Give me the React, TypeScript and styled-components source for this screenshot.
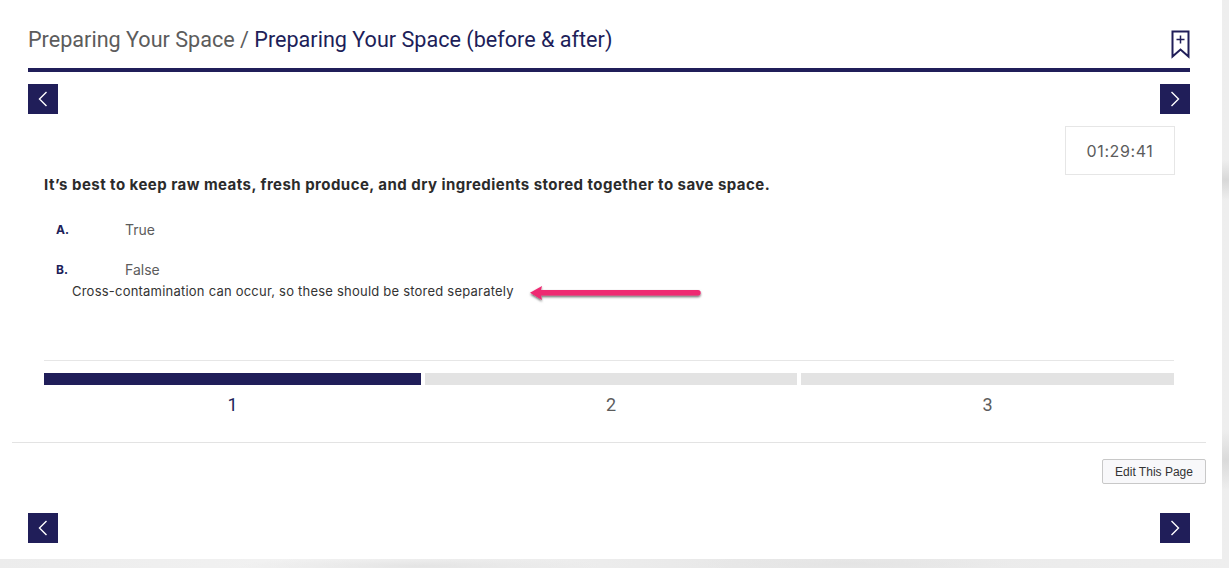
import React from 'react';
import styled, { createGlobalStyle } from 'styled-components';

const GlobalStyle = createGlobalStyle`
    html, body {
        margin: 0;
        padding: 0;
        height: 100%;
        overflow: hidden;
    }
    body {
        font-family: Inter, Roboto, 'Noto Sans', sans-serif;
        background: #fff;
    }
`;

const Chevron: React.FC<{ dir: 'left' | 'right' }> = ({ dir }) => (
    <svg width="10" height="16" viewBox="0 0 10 16" fill="none">
        <path
            d={dir === 'left' ? 'M8.5 1 L1.5 8 L8.5 15' : 'M1.5 1 L8.5 8 L1.5 15'}
            stroke="#fff"
            strokeWidth="1.4"
        />
    </svg>
);

const BookmarkIcon = () => (
    <svg width="19" height="29" viewBox="0 0 19 29" fill="none">
        <path d="M1.5 1.5 H17.5 V26.5 L9.5 19.5 L1.5 26.5 Z" stroke="#201e59" strokeWidth="2" />
        <path d="M9.5 5.5 V13.5 M5.5 9.5 H13.5" stroke="#201e59" strokeWidth="1.5" />
    </svg>
);

const PinkArrow = () => (
    <ArrowWrap>
        <svg width="180" height="24" viewBox="0 0 180 24" fill="none">
            <defs>
                <filter id="arrowShadow" x="-5%" y="-50%" width="110%" height="220%">
                    <feDropShadow dx="0" dy="1.5" stdDeviation="1.3" floodColor="#000" floodOpacity="0.6" />
                </filter>
            </defs>
            <g filter="url(#arrowShadow)">
                <path d="M14 9 L171 9 A2.7 2.7 0 0 1 171 14.4 L14 14.4 L15 19 L3 11.7 L15 5 Z" fill="#ee2a72" />
            </g>
        </svg>
    </ArrowWrap>
);

const steps = [
    { label: '1', active: true, grow: 377 },
    { label: '2', active: false, grow: 372 },
    { label: '3', active: false, grow: 373 },
];

const App: React.FC = () => (
    <Page>
        <GlobalStyle />
        <Card>
            <Header>
                <Title>
                    Preparing Your Space / <Current>Preparing Your Space (before &amp; after)</Current>
                </Title>
                <BookmarkIcon />
            </Header>

            <NavRow>
                <NavButton aria-label="Previous"><Chevron dir="left" /></NavButton>
                <NavButton aria-label="Next"><Chevron dir="right" /></NavButton>
            </NavRow>

            <Quiz>
                <TimerRow>
                    <Timer>01:29:41</Timer>
                </TimerRow>
                <Question>It’s best to keep raw meats, fresh produce, and dry ingredients stored together to save space.</Question>
                <Answer>
                    <AnswerLetter>A.</AnswerLetter>
                    <AnswerText>True</AnswerText>
                </Answer>
                <Answer $tight>
                    <AnswerLetter>B.</AnswerLetter>
                    <AnswerText>False</AnswerText>
                </Answer>
                <Explanation>
                    Cross-contamination can occur, so these should be stored separately
                    <PinkArrow />
                </Explanation>

                <Progress>
                    {steps.map(step => (
                        <Step key={step.label} $grow={step.grow}>
                            <StepBar $active={step.active} />
                            <StepLabel $active={step.active}>{step.label}</StepLabel>
                        </Step>
                    ))}
                </Progress>
            </Quiz>

            <Footer>
                <EditButton>Edit This Page</EditButton>
            </Footer>

            <BottomNav>
                <NavButton aria-label="Previous"><Chevron dir="left" /></NavButton>
                <NavButton aria-label="Next"><Chevron dir="right" /></NavButton>
            </BottomNav>
        </Card>
    </Page>
);

const Page = styled.div`
    width: 1229px;
    height: 568px;
    overflow: hidden;
    background:
        radial-gradient(ellipse 60px 20px at 1226px 180px, #d8d8d8, transparent),
        radial-gradient(ellipse 40px 30px at 1226px 460px, #dadada, transparent),
        radial-gradient(ellipse 180px 10px at 420px 566px, #e4e4e4, transparent),
        radial-gradient(ellipse 160px 10px at 850px 564px, #e4e4e4, transparent),
        linear-gradient(90deg, #ececec, #f3f3f3 30%, #e8e8e8 60%, #eeeeee);
`;

const Card = styled.div`
    width: 1222px;
    height: 559px;
    background: #fff;
    display: flex;
    flex-direction: column;
    box-sizing: border-box;
    padding: 0 16px 0 12px;
`;

const Header = styled.header`
    display: flex;
    justify-content: space-between;
    align-items: flex-end;
    height: 68px;
    margin: 0 16px;
    border-bottom: 4px solid #201e59;

    svg {
        margin-bottom: 9px;
    }
`;

const Title = styled.h1`
    margin: 0 0 15px;
    font-family: Roboto, sans-serif;
    font-size: 21.6px;
    line-height: 26px;
    font-weight: 400;
    color: #5c5c5c;
`;

const Current = styled.span`
    color: #201e59;
`;

const NavRow = styled.div`
    display: flex;
    justify-content: space-between;
    margin: 12px 16px 0;
`;

const BottomNav = styled(NavRow)`
    margin-top: 29px;
`;

const NavButton = styled.button`
    width: 30px;
    height: 30px;
    padding: 0;
    border: none;
    background: #201e59;
    display: flex;
    align-items: center;
    justify-content: center;
`;

const Quiz = styled.section`
    margin-top: 12px;
    display: flex;
    flex-direction: column;
    height: 317px;
    box-sizing: border-box;
    border-bottom: 1px solid #e3e3e3;
    padding: 0 32px;
`;

const TimerRow = styled.div`
    display: flex;
    justify-content: flex-end;
    height: 49px;
`;

const Timer = styled.div`
    width: 110px;
    height: 49px;
    box-sizing: border-box;
    margin-right: -1px;
    border: 1px solid #e6e6e6;
    display: flex;
    align-items: center;
    justify-content: center;
    font-size: 16px;
    letter-spacing: 0.6px;
    color: #5c5c5c;
`;

const Question = styled.h2`
    margin: 0;
    font-size: 15px;
    line-height: 20px;
    font-weight: 700;
    letter-spacing: 0.46px;
    color: #2b2b2b;
`;

const Answer = styled.div<{ $tight?: boolean }>`
    display: flex;
    align-items: center;
    height: 20px;
    margin-top: ${props => (props.$tight ? '20px' : '24px')};
    padding-left: 12px;
`;

const AnswerLetter = styled.span`
    width: 69px;
    font-size: 12px;
    font-weight: 700;
    color: #201e59;
`;

const AnswerText = styled.span`
    font-size: 14px;
    color: #5c5c5c;
`;

const Explanation = styled.div`
    position: relative;
    margin-top: 2px;
    padding-left: 28px;
    font-size: 13px;
    line-height: 20px;
    letter-spacing: 0.22px;
    color: #333;
`;

const ArrowWrap = styled.div`
    position: absolute;
    left: 483px;
    top: 0;
    line-height: 0;
`;

const Progress = styled.div`
    display: flex;
    gap: 4px;
    margin-top: 59px;
    padding-top: 12px;
    border-top: 1px solid #e6e6e6;
    height: 69px;
    box-sizing: border-box;
`;

const Step = styled.div<{ $grow: number }>`
    flex: ${props => props.$grow} 1 0;
    display: flex;
    flex-direction: column;
    align-items: center;
`;

const StepBar = styled.div<{ $active: boolean }>`
    width: 100%;
    height: 12px;
    background: ${props => (props.$active ? '#201e59' : '#e3e3e3')};
`;

const StepLabel = styled.div<{ $active: boolean }>`
    margin-top: 10px;
    font-family: Roboto, sans-serif;
    font-size: 18px;
    line-height: 20px;
    color: ${props => (props.$active ? '#201e59' : '#5c5c5c')};
`;

const Footer = styled.div`
    display: flex;
    justify-content: flex-end;
    padding-top: 16px;
`;

const EditButton = styled.button`
    width: 104px;
    height: 25px;
    padding: 0;
    box-sizing: border-box;
    border: 1px solid #c8c8c8;
    border-radius: 2px;
    background: #f8f8fa;
    font-family: 'Liberation Sans', Arial, sans-serif;
    font-size: 12px;
    color: #333;
`;

export default App;
